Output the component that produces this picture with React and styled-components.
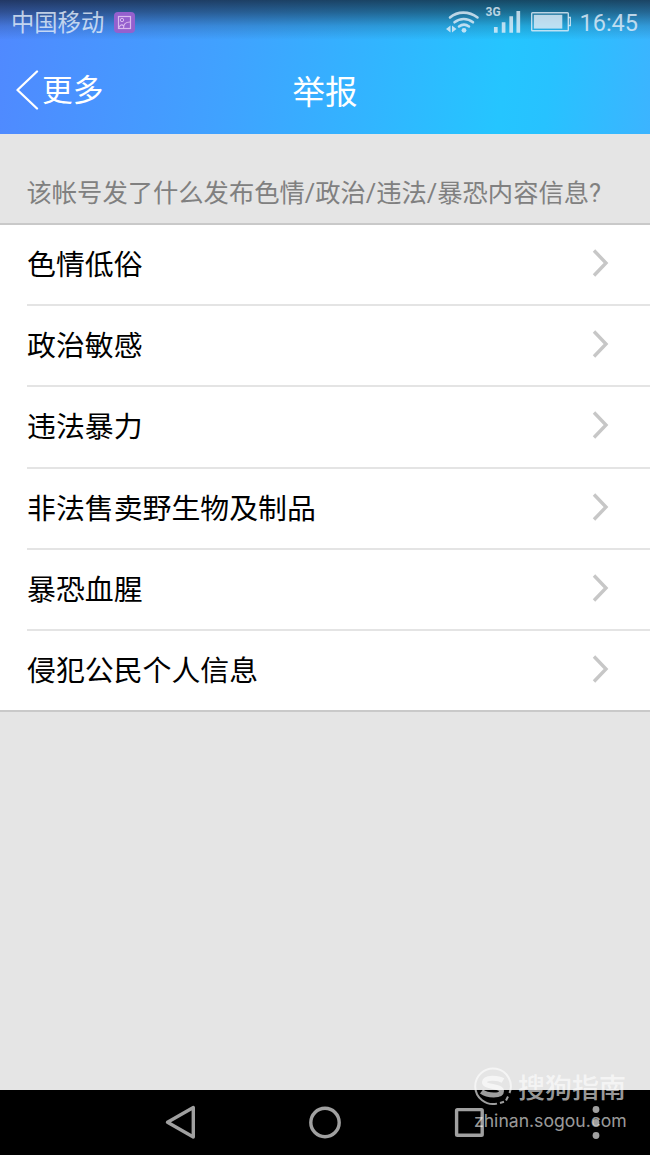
import styled, { createGlobalStyle } from "styled-components";

const GlobalStyle = createGlobalStyle`
    * {
        box-sizing: border-box;
    }
    body {
        margin: 0;
        background-color: #e5e5e5;
        font-family: Roboto, "Noto Sans CJK SC", sans-serif;
    }
`;

const Container = styled.div`
    position: relative;
    width: 650px;
    height: 1155px;
    display: flex;
    flex-direction: column;
    overflow: hidden;
    background-color: #e5e5e5;
`;

const Header = styled.header`
    height: 134px;
    flex-shrink: 0;
    background:
        linear-gradient(180deg, rgba(16, 24, 40, 0.72) 0px, rgba(16, 24, 40, 0.5) 12px, rgba(16, 24, 40, 0.18) 26px, rgba(16, 24, 40, 0) 40px),
        linear-gradient(97deg, #5089ff 0%, #40a2ff 35%, #25c5ff 77%, #27c2ff 84%, #3cb4ff 100%);
`;

const StatusBar = styled.div`
    height: 44px;
    padding: 0 12px 0 11px;
    display: flex;
    justify-content: space-between;
    color: rgba(232, 241, 250, 0.78);
`;

const StatusGroup = styled.div`
    display: flex;
    align-items: center;
`;

const Carrier = styled.span`
    font-size: 23.3px;
    line-height: 44px;
    padding-top: 2px;
    margin-right: 10px;
`;

const StatusIcons = styled.svg`
    display: block;
    margin-right: 8px;
`;

const Network = styled.text`
    font: 700 12px Roboto, sans-serif;
`;

const Time = styled.span`
    font-size: 23.5px;
    line-height: 44px;
    padding-top: 1px;
`;

const TitleBar = styled.div`
    height: 90px;
    padding: 0 16px;
    display: grid;
    grid-template-columns: 1fr auto 1fr;
    align-items: center;
    color: white;
`;

const Back = styled.div`
    height: 90px;
    padding-bottom: 2px;
    display: flex;
    align-items: center;
    font-size: 30.7px;
    line-height: 90px;
`;

const Title = styled.h1`
    margin: 0;
    padding-top: 2px;
    font-size: 32.5px;
    font-weight: 400;
    line-height: 94px;
`;

const Question = styled.p`
    height: 89px;
    flex-shrink: 0;
    margin: 0;
    padding: 36px 0 0 26.5px;
    font-size: 25.3px;
    line-height: 48px;
    color: #808080;
    white-space: nowrap;
`;

const List = styled.ul`
    margin: 0;
    padding: 0 0 0 27px;
    list-style: none;
    background-color: white;
    border-top: 2px solid #c9c9c9;
    border-bottom: 2px solid #c9c9c9;
`;

const ListItem = styled.li`
    height: 81.2px;
    padding-right: 41px;
    display: flex;
    align-items: flex-start;
    justify-content: space-between;
    font-size: 28.9px;
    line-height: 81px;
    color: black;
    border-bottom: 2px solid #e4e4e4;

    &:last-child {
        height: 79.5px;
        border-bottom: none;
    }
`;

const Arrow = styled.svg`
    flex-shrink: 0;
    margin-top: 24px;
`;

const NavBar = styled.nav`
    height: 65px;
    margin-top: auto;
    background-color: black;
    flex-shrink: 0;
`;

const Watermark = styled.div`
    position: absolute;
    top: 1065px;
    left: 472px;
    width: 160px;
    color: rgba(255, 255, 255, 0.62);
`;

const Brand = styled.div`
    height: 42px;
    display: flex;
    align-items: center;
    gap: 4px;
    font-size: 27px;
    font-weight: 500;
    line-height: 42px;
    white-space: nowrap;
`;

const BrandName = styled.span`
    padding-top: 5px;
`;

const Site = styled.div`
    padding: 1px 0 0 2px;
    font-family: Inter, sans-serif;
    font-size: 17.6px;
    line-height: 26px;
`;

const PictureIcon = () => (
    <svg width="21" height="21" viewBox="0 0 21 21" fill="none">
        <rect width="21" height="21" rx="4" fill="#9560ce" />
        <rect x="4.5" y="4.5" width="12" height="12" stroke="#d9b9ef" strokeWidth="1.2" />
        <circle cx="8" cy="8" r="1.7" stroke="#d9b9ef" />
        <path d="M5 15.5c1-2.5 3-3.5 4.5-1.5M9.5 16c0-4 2.5-6 6.5-6" stroke="#d9b9ef" strokeWidth="1.2" />
    </svg>
);

const Signals = () => (
    <StatusIcons width="127" height="44" viewBox="444 0 127 44" fill="none" stroke="currentColor">
        <path d="M450 17.5c7.5-6.5 19-6.5 27.5 0M454.5 22.3c5.5-4.5 13-4.5 18.5 0M459 26.5c3-2.3 7-2.3 10 0" strokeWidth="2.6" strokeLinecap="round" />
        <circle cx="464" cy="30.3" r="2.4" fill="currentColor" stroke="none" />
        <path d="M450.5 25.5v7l-4.5-3.5zM452 25.5v7l4.5-3.5z" fill="currentColor" stroke="none" />
        <Network x="485.5" y="16" fill="currentColor" stroke="none">3G</Network>
        <path d="M495.8 27v5.7M503.6 22.3v10.4M511.2 16.3v16.4M518.3 11v21.7" strokeWidth="3.7" />
        <rect x="531.7" y="12.7" width="36.6" height="18" rx="0.8" strokeWidth="1.4" />
        <rect x="533.8" y="14.8" width="28.5" height="13.8" fill="currentColor" stroke="none" />
        <path d="M568.5 17.5h2v8h-2" strokeWidth="1.4" />
    </StatusIcons>
);

const BackArrow = () => (
    <svg width="26" height="42" viewBox="0 0 26 42" fill="none">
        <path d="M21 1.5L1.5 20L21 38.5" stroke="white" strokeWidth="2.3" strokeLinecap="round" strokeLinejoin="round" />
    </svg>
);

const Chevron = () => (
    <Arrow width="17" height="28" viewBox="0 0 17 28" fill="none">
        <path d="M2 1.5L14 14L2 26.5" stroke="#c7c7c7" strokeWidth="3.4" />
    </Arrow>
);

const items = [
    "色情低俗",
    "政治敏感",
    "违法暴力",
    "非法售卖野生物及制品",
    "暴恐血腥",
    "侵犯公民个人信息",
];

const App = () => {
    return (
        <>
            <GlobalStyle />
            <Container>
                <Header>
                    <StatusBar>
                        <StatusGroup>
                            <Carrier>中国移动</Carrier>
                            <PictureIcon />
                        </StatusGroup>
                        <StatusGroup>
                            <Signals />
                            <Time>16:45</Time>
                        </StatusGroup>
                    </StatusBar>
                    <TitleBar>
                        <Back>
                            <BackArrow />
                            更多
                        </Back>
                        <Title>举报</Title>
                    </TitleBar>
                </Header>
                <Question>该帐号发了什么发布色情/政治/违法/暴恐内容信息?</Question>
                <List>
                    {items.map((item) => (
                        <ListItem key={item}>
                            {item}
                            <Chevron />
                        </ListItem>
                    ))}
                </List>
                <NavBar>
                    <svg width="650" height="65" viewBox="0 1090 650 65" fill="none" stroke="#a0a0a0" strokeWidth="3.4">
                        <path d="M193.3 1107.5v29.5L167.5 1122.3z" strokeLinejoin="round" />
                        <circle cx="325" cy="1122.5" r="14.2" />
                        <rect x="456.6" y="1109.6" width="25.6" height="25.6" rx="0.8" />
                        <g fill="#a0a0a0" stroke="none">
                            <circle cx="596" cy="1109.5" r="3.4" />
                            <circle cx="596" cy="1122.5" r="3.4" />
                            <circle cx="596" cy="1135.5" r="3.4" />
                        </g>
                    </svg>
                </NavBar>
                <Watermark>
                    <Brand>
                        <svg width="42" height="42" viewBox="0 0 42 42" fill="none" stroke="currentColor">
                            <path d="M25 38.6A17.8 17.8 0 1 1 37.5 28M28 38l4-1.2M34 35.5l2-4" strokeWidth="2" />
                            <path d="M31 15.5c-5-3-18-3.5-18.5 1.5-.4 5.5 17 3.5 17 9 0 5.5-14 5-20 .5" strokeWidth="5" />
                        </svg>
                        <BrandName>搜狗指南</BrandName>
                    </Brand>
                    <Site>zhinan.sogou.com</Site>
                </Watermark>
            </Container>
        </>
    );
};

export default App;
